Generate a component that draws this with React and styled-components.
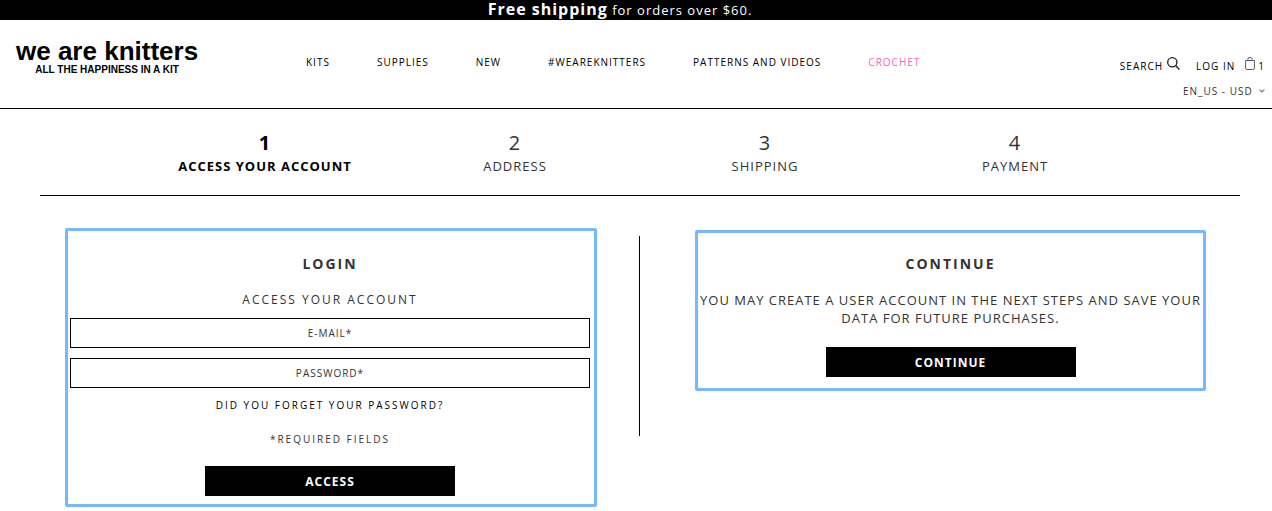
import React, { useState } from "react";
import styled, { createGlobalStyle } from "styled-components";

const NAV = [
  { title: "Kits" },
  { title: "Supplies" },
  { title: "New" },
  { title: "#weareknitters" },
  { title: "Patterns and videos" },
  { title: "Crochet", color: "#f167c5" },
];

const STEPS = ["Access your account", "Address", "Shipping", "Payment"];

const SearchIcon = () => (
  <svg width="13" height="13" viewBox="0 0 13 13" fill="none" stroke="#1c1c28">
    <circle cx="5.3" cy="5.3" r="4.6" strokeWidth="1.3" />
    <path d="M8.6 8.6L12.4 12.4" strokeWidth="1.4" />
  </svg>
);

const BagIcon = () => (
  <svg width="10" height="13" viewBox="0 0 10 13" fill="none" stroke="#5a5a68">
    <path d="M0.6 3.5h8.8v7.5a1.5 1.5 0 0 1-1.5 1.5H2.1a1.5 1.5 0 0 1-1.5-1.5z" />
    <path d="M2.8 3.5V2.6a2.2 2.2 0 0 1 4.4 0V3.5" />
  </svg>
);

const ChevronIcon = () => (
  <svg width="6" height="4" viewBox="0 0 6 4" fill="none" stroke="#777">
    <path d="M0.6 0.6L3 3L5.4 0.6" strokeWidth="1.2" />
  </svg>
);

const App = () => {
  const [email, setEmail] = useState("");
  const [password, setPassword] = useState("");

  return (
    <>
      <GlobalStyle />
      <Promo>
        <strong>Free shipping</strong> for orders over $60.
      </Promo>
      <Header>
        <Logo href="#">
          <LogoName>we are knitters</LogoName>
          <LogoTag>ALL THE HAPPINESS IN A KIT</LogoTag>
        </Logo>
        <Nav>
          {NAV.map((item) => (
            <NavLink key={item.title} href="#" $color={item.color}>
              {item.title}
            </NavLink>
          ))}
        </Nav>
        <Tools>
          <ToolRow>
            <SearchButton type="button">
              Search
              <SearchIcon />
            </SearchButton>
            <ToolLink href="#">Log in</ToolLink>
            <CartLink href="#">
              <BagIcon />1
            </CartLink>
          </ToolRow>
          <Locale>
            <select aria-label="Language and currency">
              <option>EN_US - USD</option>
            </select>
            <ChevronIcon />
          </Locale>
        </Tools>
      </Header>
      <Checkout>
        <Steps>
          {STEPS.map((step, i) => (
            <Step key={step} $active={i === 0}>
              <StepNumber>{i + 1}</StepNumber>
              <StepName>{step}</StepName>
            </Step>
          ))}
        </Steps>
        <Columns>
          <LoginPanel onSubmit={(e) => e.preventDefault()}>
            <Title>Login</Title>
            <Subtitle>Access your account</Subtitle>
            <Field
              type="email"
              aria-label="E-mail"
              placeholder="E-MAIL*"
              value={email}
              onChange={(e) => setEmail(e.target.value)}
            />
            <Field
              type="password"
              aria-label="Password"
              placeholder="PASSWORD*"
              value={password}
              onChange={(e) => setPassword(e.target.value)}
            />
            <ForgotLink href="#">Did you forget your password?</ForgotLink>
            <Required>*Required fields</Required>
            <MainButton type="submit">Access</MainButton>
          </LoginPanel>
          <Divider />
          <GuestPanel>
            <Title>Continue</Title>
            <GuestText>
              You may create a user account in the next steps and save your data
              for future purchases.
            </GuestText>
            <MainButton type="button">Continue</MainButton>
          </GuestPanel>
        </Columns>
      </Checkout>
    </>
  );
};

const GlobalStyle = createGlobalStyle`
  * {
    box-sizing: border-box;
  }
  body {
    margin: 0;
    background-color: white;
    color: #333;
    font-family: "Open Sans", sans-serif;
    letter-spacing: 1px;
  }
  a {
    color: black;
    text-decoration: none;
  }
  button,
  input,
  select {
    font-family: inherit;
    letter-spacing: inherit;
  }
  svg {
    display: block;
    flex-shrink: 0;
  }
  h2,
  p,
  ol {
    margin: 0;
    padding: 0;
  }
`;

const Promo = styled.div`
  height: 20px;
  padding-right: 32px;
  background-color: black;
  color: white;
  font-size: 13px;
  line-height: 20px;
  text-align: center;
  strong {
    font-size: 16px;
    line-height: 18px;
  }
`;

const Header = styled.header`
  display: grid;
  grid-template-columns: 290px 1fr auto;
  padding: 0 7px 0 16px;
  height: 89px;
  border-bottom: 1px solid black;
`;

const Logo = styled.a`
  justify-self: start;
  padding-top: 16px;
  font-family: "Liberation Sans", Arial, sans-serif;
  font-weight: bold;
  letter-spacing: 0;
  text-align: center;
`;

const LogoName = styled.div`
  font-size: 26px;
  line-height: 30px;
`;

const LogoTag = styled.div`
  font-size: 10px;
  line-height: 8px;
`;

const Nav = styled.nav`
  display: flex;
  gap: 47px;
  padding-top: 35px;
`;

const NavLink = styled.a`
  color: ${(props) => props.$color || "black"};
  font-size: 10px;
  line-height: 15px;
  text-transform: uppercase;
  white-space: nowrap;
`;

const Tools = styled.div`
  display: flex;
  flex-direction: column;
  align-items: flex-end;
  gap: 9px;
  padding-top: 37px;
  font-size: 10px;
`;

const ToolRow = styled.div`
  display: flex;
  align-items: center;
  line-height: 18px;
`;

const SearchButton = styled.button`
  display: flex;
  gap: 4px;
  padding: 0;
  margin-right: 16px;
  border: none;
  background: none;
  color: black;
  font-size: 10px;
  line-height: 18px;
  text-transform: uppercase;
`;

const ToolLink = styled.a`
  margin-right: 10px;
  text-transform: uppercase;
`;

const CartLink = styled.a`
  display: flex;
  gap: 3px;
`;

const Locale = styled.label`
  display: flex;
  align-items: center;
  gap: 6px;
  select {
    appearance: none;
    padding: 0;
    border: none;
    background: none;
    color: #333;
    font-size: 10px;
    line-height: 14px;
  }
`;

const Checkout = styled.main`
  padding: 0 32px 0 40px;
`;

const Steps = styled.ol`
  display: grid;
  grid-template-columns: repeat(4, 1fr);
  padding: 20px 100px;
  border-bottom: 1px solid black;
  list-style: none;
`;

const Step = styled.li`
  color: ${(props) => (props.$active ? "black" : "#333")};
  font-weight: ${(props) => (props.$active ? 700 : 400)};
  text-align: center;
`;

const StepNumber = styled.div`
  font-size: 20px;
  line-height: 28px;
`;

const StepName = styled.div`
  font-size: 13px;
  line-height: 18px;
  text-transform: uppercase;
`;

const Columns = styled.div`
  display: grid;
  grid-template-columns: 1fr 1px 1fr;
  align-items: start;
  padding: 32px 1px 0 0;
`;

const LoginPanel = styled.form`
  display: flex;
  flex-direction: column;
  align-items: center;
  margin: 0 42px 0 25px;
  padding: 24px 4px 8px 2px;
  border: 3px solid #76b8fd;
  border-radius: 2px;
`;

const GuestPanel = styled.section`
  display: flex;
  flex-direction: column;
  align-items: center;
  margin: 2px 33px 0 55px;
  padding: 22px 0 11px;
  border: 3px solid #76b8fd;
  border-radius: 2px;
`;

const Divider = styled.div`
  height: 200px;
  margin-top: 8px;
  background-color: black;
`;

const Title = styled.h2`
  margin-bottom: 18px;
  font-size: 14px;
  font-weight: 700;
  letter-spacing: 2px;
  line-height: 18px;
  text-transform: uppercase;
`;

const Subtitle = styled.p`
  margin-bottom: 9px;
  font-size: 12px;
  letter-spacing: 2px;
  line-height: 18px;
  text-transform: uppercase;
`;

const Field = styled.input`
  width: 100%;
  height: 30px;
  margin-bottom: 10px;
  padding: 0 8px;
  border: 1px solid black;
  background-color: white;
  font-size: 10px;
  text-align: center;
  &::placeholder {
    color: #333;
    opacity: 1;
  }
`;

const ForgotLink = styled.a`
  margin-bottom: 19px;
  font-size: 10px;
  letter-spacing: 2px;
  line-height: 15px;
  text-transform: uppercase;
`;

const Required = styled.p`
  margin-bottom: 19px;
  font-size: 10px;
  letter-spacing: 2px;
  line-height: 15px;
  text-transform: uppercase;
`;

const GuestText = styled.p`
  margin-bottom: 20px;
  font-size: 13px;
  line-height: 18px;
  text-align: center;
  text-transform: uppercase;
`;

const MainButton = styled.button`
  width: 250px;
  height: 30px;
  border: none;
  background-color: black;
  color: white;
  font-size: 12px;
  font-weight: 700;
  text-transform: uppercase;
`;

export default App;
